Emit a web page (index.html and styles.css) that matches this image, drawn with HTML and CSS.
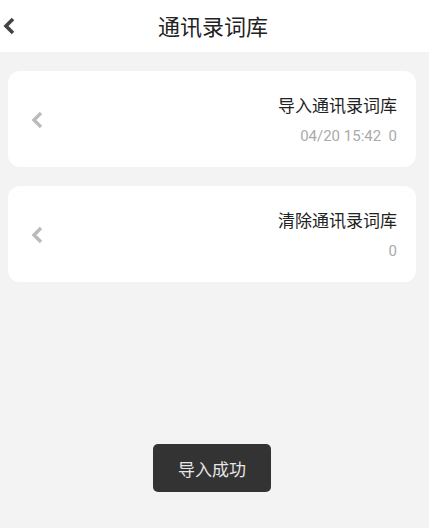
FILE: index.html
```html
<!DOCTYPE html>
<html lang="zh-CN">
<head>
    <meta charset="UTF-8">
    <meta name="viewport" content="width=device-width, initial-scale=1.0">
    <title>通讯录词库</title>
    <link rel="stylesheet" href="styles.css">
</head>
<body>
    <div class="header">
        <svg class="back" width="14" height="18" viewBox="0 0 14 18">
            <polyline points="11,2 4,9 11,16" fill="none" stroke="#444" stroke-width="3.6"/>
        </svg>
        <h1>通讯录词库</h1>
    </div>
    <div class="list">
        <div class="card">
            <svg class="arrow" width="14" height="18" viewBox="0 0 14 18">
                <polyline points="11,2 4,9 11,16" fill="none" stroke="#bbb" stroke-width="3.4"/>
            </svg>
            <div class="info">
                <div class="title">导入通讯录词库</div>
                <div class="sub">04/20 15:42&nbsp;&nbsp;0</div>
            </div>
        </div>
        <div class="card">
            <svg class="arrow" width="14" height="18" viewBox="0 0 14 18">
                <polyline points="11,2 4,9 11,16" fill="none" stroke="#bbb" stroke-width="3.4"/>
            </svg>
            <div class="info">
                <div class="title">清除通讯录词库</div>
                <div class="sub">0</div>
            </div>
        </div>
    </div>
    <div class="toast">导入成功</div>
</body>
</html>
```

FILE: styles.css
```css
body {
    margin: 0;
    font-family: "Noto Sans CJK SC", "Noto Sans", sans-serif;
    background: #f3f3f3;
    height: 528px;
    overflow: hidden;
}
.header {
    height: 52px;
    background: #fff;
    display: flex;
    align-items: center;
    justify-content: center;
    position: relative;
}
.header h1 {
    margin: 0 0 0 -3px;
    font-size: 22px;
    font-weight: normal;
    color: #222;
    line-height: 30px;
    padding-bottom: 3px;
}
.back {
    position: absolute;
    left: 2px;
    top: 17px;
}
.list {
    padding: 19px 13px 0 8px;
    display: flex;
    flex-direction: column;
    gap: 19px;
}
.card {
    background: #fff;
    border-radius: 12px;
    height: 96px;
    display: flex;
    align-items: center;
    padding: 0 19px 0 22px;
    box-sizing: border-box;
}
.arrow {
    margin-top: 2px;
}
.info {
    flex: 1;
    text-align: right;
}
.title {
    font-size: 17px;
    color: #222;
    line-height: 22px;
}
.sub {
    font-family: Roboto, "Noto Sans", sans-serif;
    font-size: 15px;
    color: #aaa;
    margin-top: 11px;
    line-height: 18px;
}
.toast {
    position: absolute;
    left: 153px;
    top: 444px;
    width: 118px;
    height: 48px;
    background: #333;
    color: #e6e6e6;
    border-radius: 5px;
    font-size: 17px;
    display: flex;
    align-items: center;
    justify-content: center;
}
```
